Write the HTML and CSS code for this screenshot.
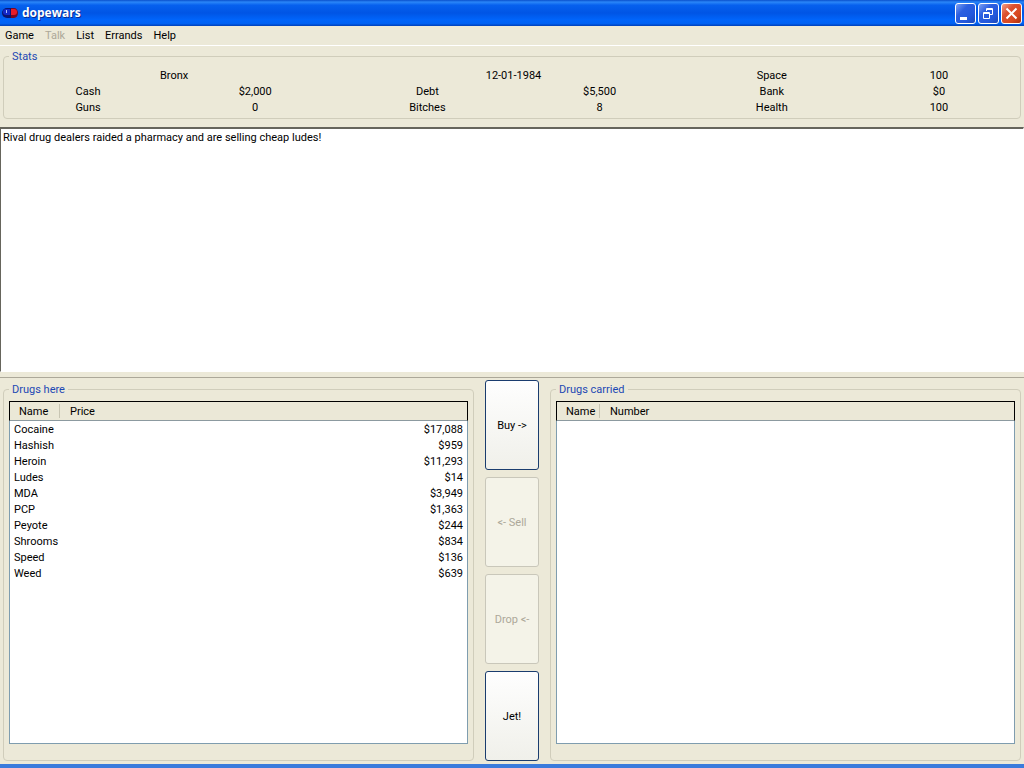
FILE: index.html
```
<!DOCTYPE html>
<html lang="en">

<head>
    <meta charset="UTF-8">
    <meta name="viewport" content="width=device-width, initial-scale=1.0">
    <title>dopewars</title>
    <link rel="stylesheet" href="styles.css">
</head>

<body>
    <header class="titlebar">
        <svg class="app-icon" viewBox="0 0 16 12" aria-hidden="true">
            <path d="M5 1h6v10H5a5 5 0 0 1 0-10z" fill="#0a1470" />
            <path d="M9 1h3a4 5 0 0 1 0 10H9z" fill="#7a0820" />
            <path d="M4 2h4v6H4a3 3 0 0 1 0-6z" fill="#1428c8" />
            <path d="M9 2h3a3 3 0 0 1 0 6H9z" fill="#e81c28" />
            <path d="M4 3h1v3H4z" fill="#a8c0ff" />
        </svg>
        <h1>dopewars</h1>
        <div class="window-buttons">
            <button type="button" aria-label="Minimize">
                <svg viewBox="0 0 21 21"><path d="M5 14h7v3H5z" fill="#fff" /></svg>
            </button>
            <button type="button" aria-label="Restore">
                <svg viewBox="0 0 21 21" fill="none" stroke="#fff">
                    <path d="M8.500 8V5.500h6v6H12M8 6.500h7M5.500 9.500h6v6h-6zM5 10.500h7" />
                </svg>
            </button>
            <button type="button" class="close" aria-label="Close">
                <svg viewBox="0 0 21 21" fill="none" stroke="#fff" stroke-width="2">
                    <path d="M5.500 5.500l10 10M15.500 5.500l-10 10" />
                </svg>
            </button>
        </div>
    </header>

    <nav class="menubar">
        <button type="button">Game</button>
        <button type="button" disabled>Talk</button>
        <button type="button">List</button>
        <button type="button">Errands</button>
        <button type="button">Help</button>
    </nav>

    <main>
        <section class="stats">
            <fieldset>
                <legend>Stats</legend>
                <table>
                    <colgroup>
                        <col class="narrow">
                        <col class="wide" span="4">
                        <col>
                    </colgroup>
                    <tr>
                        <td colspan="2">Bronx</td>
                        <td colspan="2">12-01-1984</td>
                        <td>Space</td>
                        <td>100</td>
                    </tr>
                    <tr>
                        <td>Cash</td>
                        <td>$2,000</td>
                        <td>Debt</td>
                        <td>$5,500</td>
                        <td>Bank</td>
                        <td>$0</td>
                    </tr>
                    <tr>
                        <td>Guns</td>
                        <td>0</td>
                        <td>Bitches</td>
                        <td>8</td>
                        <td>Health</td>
                        <td>100</td>
                    </tr>
                </table>
            </fieldset>
        </section>

        <textarea class="messages" aria-label="Messages" spellcheck="false" readonly>Rival drug dealers raided a pharmacy and are selling cheap ludes!</textarea>

        <section class="trade">
            <fieldset>
                <legend>Drugs here</legend>
                <div class="list">
                    <table class="here">
                        <thead>
                            <tr><th>Name</th><th>Price</th></tr>
                        </thead>
                        <tbody>
                            <tr><td>Cocaine</td><td>$17,088</td></tr>
                            <tr><td>Hashish</td><td>$959</td></tr>
                            <tr><td>Heroin</td><td>$11,293</td></tr>
                            <tr><td>Ludes</td><td>$14</td></tr>
                            <tr><td>MDA</td><td>$3,949</td></tr>
                            <tr><td>PCP</td><td>$1,363</td></tr>
                            <tr><td>Peyote</td><td>$244</td></tr>
                            <tr><td>Shrooms</td><td>$834</td></tr>
                            <tr><td>Speed</td><td>$136</td></tr>
                            <tr><td>Weed</td><td>$639</td></tr>
                        </tbody>
                    </table>
                </div>
            </fieldset>

            <div class="actions">
                <button type="button">Buy -&gt;</button>
                <button type="button" disabled>&lt;- Sell</button>
                <button type="button" disabled>Drop &lt;-</button>
                <button type="button">Jet!</button>
            </div>

            <fieldset>
                <legend>Drugs carried</legend>
                <div class="list">
                    <table class="carried">
                        <thead>
                            <tr><th>Name</th><th>Number</th></tr>
                        </thead>
                    </table>
                </div>
            </fieldset>
        </section>
    </main>
</body>

</html>
```
FILE: styles.css
```
* {
    box-sizing: border-box;
}

body {
    margin: 0;
    min-height: 100vh;
    display: flex;
    flex-direction: column;
    font: 11px/16px Roboto, "Liberation Sans", sans-serif;
    color: #000;
    background-color: #ece9d8;
    border-bottom: 4px solid #3a7bdc;
}

button {
    font: inherit;
    color: inherit;
    padding: 0;
}

/* title bar */

.titlebar {
    display: flex;
    align-items: center;
    gap: 4px;
    height: 26px;
    padding: 0 2px;
    background: linear-gradient(#0a50cc, #2a86f8 8%, #0660ee 20%, #0055e5 50%, #0064fa 75%, #0062f4 90%, #0040b8);
}

.app-icon {
    width: 16px;
    height: 12px;
}

.titlebar h1 {
    margin: 0;
    font: bold 12px/20px "Open Sans", sans-serif;
    color: #fff;
    text-shadow: 1px 1px #0a2a90;
}

.window-buttons {
    display: flex;
    gap: 2px;
    margin-left: auto;
}

.window-buttons button {
    width: 21px;
    height: 21px;
    border: 1px solid #fff;
    border-radius: 3px;
    background: linear-gradient(135deg, #7ba0f4, #2c5fe0 35%, #2458dc 70%, #1c48b8);
}

.window-buttons svg {
    display: block;
    width: 21px;
    height: 21px;
    margin: -1px;
}

.window-buttons .close {
    background: linear-gradient(135deg, #f0a088, #dc5030 35%, #d84820 70%, #a83010);
}

/* menu */

.menubar {
    display: flex;
    gap: 11px;
    height: 20px;
    padding: 1px 5px 0;
    border-bottom: 1px solid #fff;
}

.menubar button {
    border: 0;
    background: none;
}

.menubar button:disabled {
    color: #aca899;
}

main {
    flex: 1;
    display: grid;
    grid-template-rows: auto 245fr 392fr;
}

fieldset {
    min-width: 0;
    margin: 0;
    border: 1px solid #d0cdbb;
    border-radius: 4px;
}

legend {
    margin: 0;
    padding: 1px 3px 0;
    line-height: 15px;
    color: #1c48b4;
}

table {
    width: 100%;
    border-collapse: collapse;
    table-layout: fixed;
}

th,
td {
    padding: 0;
    font-weight: normal;
}

/* stats */

.stats {
    padding: 2px 3px 8px;
}

.stats fieldset {
    padding: 4px 0 2px 3px;
}

.stats legend {
    margin-left: 2px;
}

.stats .narrow {
    width: 16%;
}

.stats .wide {
    width: 17%;
}

.stats td {
    text-align: center;
}

/* messages */

.messages {
    width: 100%;
    height: 100%;
    padding: 1px 2px;
    font: inherit;
    color: inherit;
    background-color: #fff;
    border: 1px solid #fff;
    border-top: 2px solid #66655c;
    border-left: 1px solid #66655c;
    resize: none;
    outline: none;
}

/* drug lists */

.trade {
    display: grid;
    grid-template-columns: 1fr 54px 1fr;
    gap: 11px;
    margin-top: 5px;
    padding: 2px 3px 3px;
    border-top: 1px solid #aca899;
}

.trade fieldset {
    display: flex;
    margin-top: 1px;
    padding: 4px 5px 16px;
}

.list {
    flex: 1;
    background-color: #fff;
    border: 1px solid #7f9daf;
    border-top: 0;
}

/* the header frame covers the list's side borders */
.list table {
    width: calc(100% + 2px);
    margin: 0 -1px;
    border-collapse: separate;
    border-spacing: 0;
}

.list thead {
    background-color: #ebe8d7;
}

.list th {
    height: 20px;
    padding: 2px 0 0 10px;
    text-align: left;
    border-top: 1px solid #000;
    border-bottom: 1px solid #8c9aa0;
}

.list th:first-child {
    padding-left: 9px;
    border-left: 1px solid #000;
    background: linear-gradient(#c8c5b3, #c8c5b3) right / 1px 14px no-repeat;
}

.list th:last-child {
    border-right: 1px solid #000;
}

.here th:first-child {
    width: 51px;
}

.carried th:first-child {
    width: 44px;
}

.list tbody::before {
    content: "";
    display: block;
    height: 1px;
}

.list td {
    padding: 0 5px;
}

.list td:last-child {
    text-align: right;
}

.actions {
    display: grid;
    grid-auto-rows: 1fr;
    gap: 7px;
}

.actions button {
    padding-top: 2px;
    border: 1px solid #1a3c6e;
    border-radius: 3px;
    background: linear-gradient(#fefefe, #f0f0ea);
}

.actions button:disabled {
    color: #aca899;
    border-color: #c9c7ba;
    background: #f4f3e8;
}
```
